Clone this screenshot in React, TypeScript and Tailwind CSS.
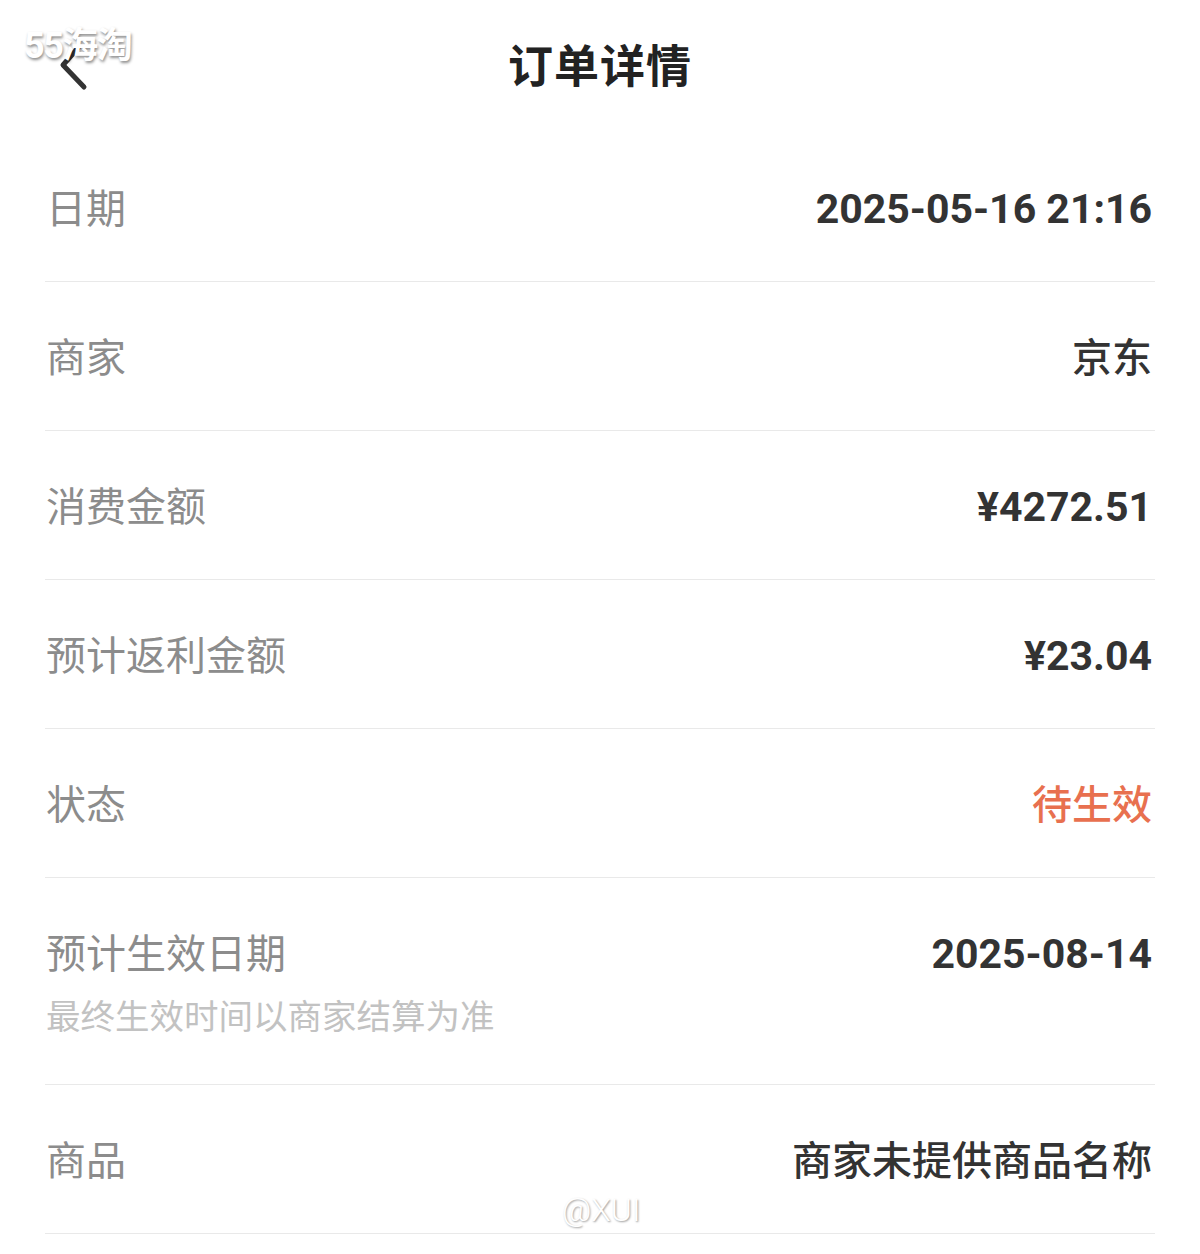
const rows = [
  { label: "日期", value: "2025-05-16 21:16" },
  { label: "商家", value: "京东", cjk: true },
  { label: "消费金额", value: "¥4272.51" },
  { label: "预计返利金额", value: "¥23.04" },
  { label: "状态", value: "待生效", cjk: true, accent: true },
  { label: "预计生效日期", value: "2025-08-14", note: "最终生效时间以商家结算为准" },
  { label: "商品", value: "商家未提供商品名称", cjk: true },
];

const Row = ({ label, value, note, accent, cjk }: any) => (
  <div className="border-b border-[#e9e9e9]">
    <div className={`flex justify-between items-start ${note ? "pt-[54px] pb-[44px]" : "pt-[54px] pb-[49px]"}`}>
      <div className="flex flex-col pl-[1px]">
        <span className="text-[40px] leading-[45px] text-[#8c8c8c]">{label}</span>
        {note && (
          <span className="mt-[18px] text-[34.5px] leading-[45px] text-[#c2c2c2]">{note}</span>
        )}
      </div>
      <span
        className={`pr-[3px] leading-[45px] ${
          cjk ? "text-[40px] font-medium" : "text-[41px] font-bold"
        } ${accent ? "text-[#e8704f]" : "text-[#333333]"}`}
      >
        {value}
      </span>
    </div>
  </div>
);

export default function App() {
  return (
    <div
      className="relative w-[1200px] h-[1254px] overflow-hidden bg-white"
      style={{ fontFamily: 'Roboto, "Noto Sans CJK SC", sans-serif' }}
    >
      <header className="relative h-[133px] flex items-center justify-center pt-[3px]">
        <svg
          className="absolute left-[55px] top-[42px] w-[40px] h-[52px]"
          viewBox="0 0 40 52"
          fill="none"
          stroke="#333"
          strokeWidth="5"
          strokeLinecap="round"
          strokeLinejoin="round"
        >
          <path d="M23 6 L8 23 L29 45" />
        </svg>
        <h1 className="text-[45px] font-bold text-[#222] tracking-[1px]">订单详情</h1>
      </header>

      <div className="px-[45px]">
        {rows.map(r => (
          <Row key={r.label} {...r} />
        ))}
      </div>

      {/* watermarks */}
      <span
        className="absolute left-[24px] top-[19px] text-[36px] font-bold text-white tracking-[-1.5px]"
        style={{ textShadow: "1px 2px 3px rgba(0,0,0,0.45)" }}
      >
        55海淘
      </span>
      <span
        className="absolute left-[562px] top-[1186px] text-[32px] font-light text-white"
        style={{ textShadow: "1px 1px 2px rgba(0,0,0,0.4)" }}
      >
        @XUI
      </span>
    </div>
  );
}
